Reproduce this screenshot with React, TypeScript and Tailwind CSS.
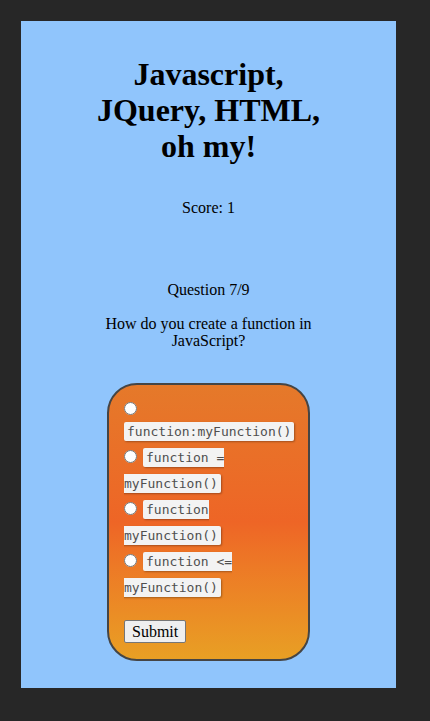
import React from 'react';

const options = [
  'function:myFunction()',
  'function = myFunction()',
  'function myFunction()',
  'function <= myFunction()',
];

export default function App() {
  return (
    <div className="min-h-[721px] w-[430px] bg-[#272727] pt-[21px] font-['Liberation_Serif',serif] text-black">
      <div className="ml-[21px] flex h-[667px] w-[375px] flex-col items-center bg-[#90c5fc]">
        <h1 className="mt-[35px] w-[250px] text-center text-[32px] font-bold leading-[36px]">
          Javascript, JQuery, HTML, oh my!
        </h1>
        <p className="mt-[35px] text-[16px] leading-[18px]">Score: 1</p>

        <p className="mt-[64px] text-[16px] leading-[18px]">Question 7/9</p>
        <p className="mt-[16px] w-[220px] text-center text-[16px] leading-[17px]">
          How do you create a function in JavaScript?
        </p>

        {/* answers card */}
        <form className="mt-[34px] w-[203px] rounded-[30px] border-2 border-[#454545] bg-gradient-to-b from-[#e5792a] via-[#ee6526] to-[#e89f24] px-[15px] pt-[14px] pb-[15px]">
          <div className="text-[16px] leading-[20px]">
            {options.map((opt) => (
              <React.Fragment key={opt}>
                <input type="radio" name="answer" className="mr-[2px] h-[13px] w-[13px] align-[-1px]" />{' '}
                <label>
                  <code className="rounded-[2px] bg-[#f3f3f3] px-[3px] py-[2px] font-['DejaVu_Sans_Mono',monospace] text-[13px] leading-[26px] text-[#4f4f4f] shadow-[1px_1px_2px_rgba(0,0,0,0.3)]">
                    {opt}
                  </code>
                </label>
                <br />
              </React.Fragment>
            ))}
          </div>
          <button
            type="button"
            className="mt-[19px] rounded-[2px] border border-[#767676] bg-[#efefef] px-[7px] py-[1px] text-[16px] leading-[19px]"
          >
            Submit
          </button>
        </form>
      </div>
    </div>
  );
}
